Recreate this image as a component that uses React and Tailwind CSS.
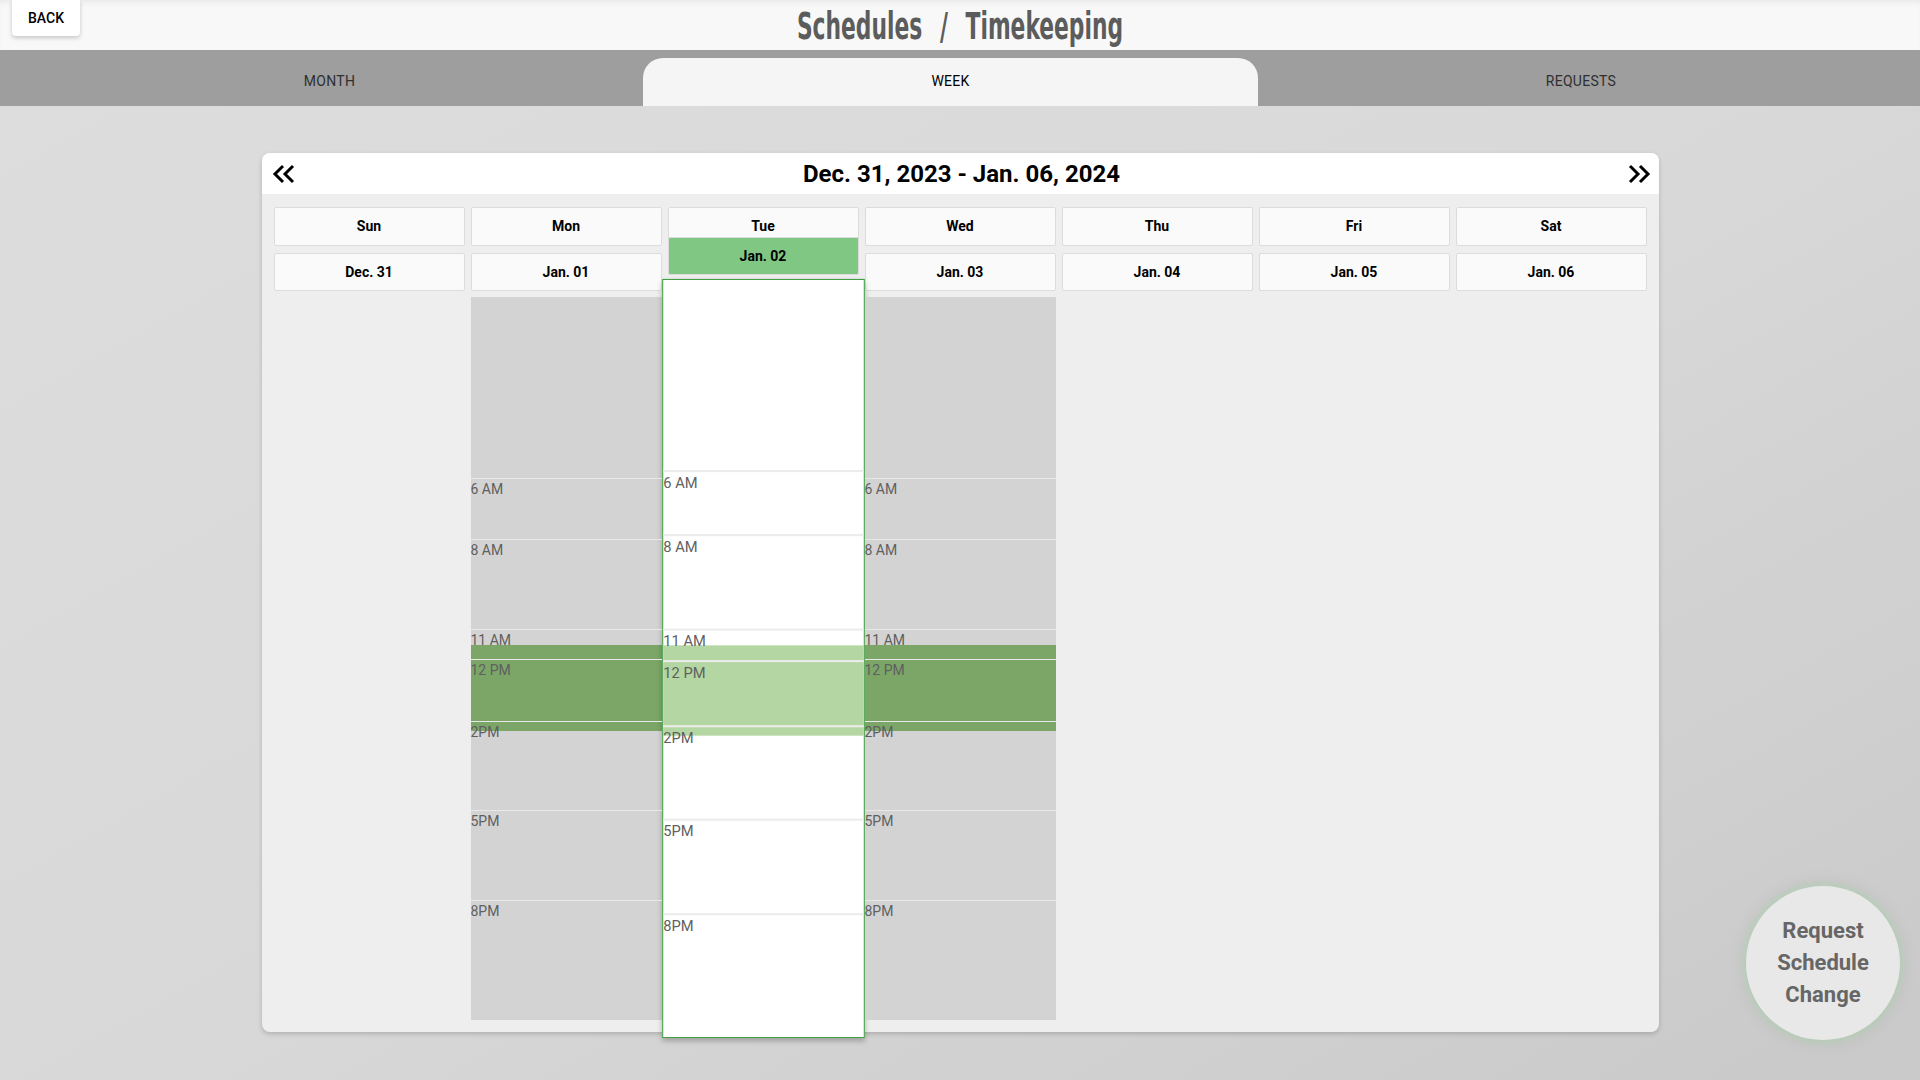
import React from "react";

const days = [
  { name: "Sun", date: "Dec. 31", body: null },
  { name: "Mon", date: "Jan. 01", body: "gray" },
  { name: "Tue", date: "Jan. 02", body: "today" },
  { name: "Wed", date: "Jan. 03", body: "gray" },
  { name: "Thu", date: "Jan. 04", body: null },
  { name: "Fri", date: "Jan. 05", body: null },
  { name: "Sat", date: "Jan. 06", body: null },
];

// heights in px at 30px / hour
const slots = [
  { label: null, h: 181 },
  { label: "6 AM", h: 61 },
  { label: "8 AM", h: 90 },
  { label: "11 AM", h: 30 },
  { label: "12 PM", h: 62 },
  { label: "2PM", h: 89 },
  { label: "5PM", h: 90 },
  { label: "8PM", h: 120 },
];

function Chevrons({ flip }) {
  return (
    <svg width="24" height="20" viewBox="0 0 24 20" className={flip ? "rotate-180" : ""}>
      <path d="M11 2 L3 10 L11 18" fill="none" stroke="#000" strokeWidth="3" />
      <path d="M21 2 L13 10 L21 18" fill="none" stroke="#000" strokeWidth="3" />
    </svg>
  );
}

function DayBody({ today }) {
  return (
    <div
      className={
        today
          ? "relative h-[723px] bg-white border border-[#3f9c42] shadow-[0_3px_5px_rgba(0,0,0,0.25)] scale-105 -mx-[1px]"
          : "relative h-[723px] bg-[#d3d3d3]"
      }
    >
      <div
        className={
          today
            ? "absolute left-0 right-0 top-[348px] h-[86px] bg-[#b3d6a2]"
            : "absolute left-0 right-0 top-[348px] h-[86px] bg-[#7ba668]"
        }
      />
      <div className="relative z-10 flex flex-col">
        {slots.map((s, i) => (
          <div
            key={i}
            style={{ height: s.h }}
            className={i === 0 ? "" : today ? "border-t-2 border-[#ececec]" : "border-t border-[#e8e8e8]"}
          >
            {s.label && (
              <div className="pt-[2px] text-[14px] leading-[16px] text-[#5f5f5f]">{s.label}</div>
            )}
          </div>
        ))}
      </div>
    </div>
  );
}

export default function App() {
  return (
    <div className="relative h-[1080px] w-full overflow-hidden bg-gradient-to-br from-[#dddddd] via-[#d9d9d9] to-[#c9c9c9] font-['Roboto',sans-serif]">
      <header className="grid h-[50px] grid-cols-[1fr_auto_1fr] bg-[#f8f8f8] shadow-[inset_0_5px_6px_-3px_rgba(0,0,0,0.07)]">
        <div className="pl-[12px]">
          <button className="h-[36px] w-[68px] rounded-b-[4px] bg-white text-[14px] font-medium text-black shadow-[0_2px_4px_rgba(0,0,0,0.2)]">
            BACK
          </button>
        </div>
        <h1 className="flex scale-x-[0.655] gap-[27px] whitespace-nowrap pt-[3px] font-['DejaVu_Sans_Condensed','DejaVu_Sans',sans-serif] text-[37px] font-bold leading-[47px] text-[#5c5c5c]">
          <span>Schedules</span>
          <span>/</span>
          <span>Timekeeping</span>
        </h1>
        <div />
      </header>

      <nav className="grid h-[56px] grid-cols-[627px_615px_1fr] bg-[#9e9e9e] px-4 text-[14px] uppercase tracking-[0.02em]">
        <div className="flex items-center justify-center pt-[6px] text-[#2f2f2f]">Month</div>
        <div className="mt-[8px] flex items-center justify-center rounded-t-[20px] bg-[#f5f5f5] pb-[2px] text-black">Week</div>
        <div className="flex items-center justify-center pt-[6px] text-[#2f2f2f]">Requests</div>
      </nav>

      <div className="flex justify-center pt-[47px]">
        <div className="h-[879px] w-[1397px] rounded-[8px] bg-[#eeeeee] shadow-[0_2px_5px_rgba(0,0,0,0.18)]">
          <div className="flex h-[41px] items-center justify-between rounded-t-[8px] bg-white pl-[10px] pr-[7px]">
            <Chevrons />
            <div className="text-[24px] font-bold text-black">Dec. 31, 2023 - Jan. 06, 2024</div>
            <Chevrons flip />
          </div>

          <div className="grid grid-cols-7 items-start gap-x-[6px] px-[12px] pt-[13px]">
            {days.map((d) => (
              <div key={d.name} className="flex flex-col">
                <div className="flex h-[39px] items-center justify-center rounded-[2px] border border-[#dcdcdc] bg-[#fafafa] text-[14px] font-bold text-black">
                  {d.name}
                </div>
                <div
                  className={
                    d.body === "today"
                      ? "relative z-20 mt-[7px] flex h-[38px] -translate-y-[16px] items-center justify-center rounded-[2px] border border-[#dcdcdc] bg-[#81c784] text-[14px] font-bold text-black"
                      : "mt-[7px] flex h-[38px] items-center justify-center rounded-[2px] border border-[#dcdcdc] bg-[#fafafa] text-[14px] font-bold text-black"
                  }
                >
                  {d.date}
                </div>
                {d.body && (
                  <div className="mt-[6px]">
                    <DayBody today={d.body === "today"} />
                  </div>
                )}
              </div>
            ))}
          </div>
        </div>
      </div>

      <button className="absolute bottom-[40px] right-[20px] flex h-[154px] w-[154px] items-center justify-center rounded-full bg-[#e8e8e8] text-[22px] font-bold leading-[32px] text-[#666666] shadow-[0_0_6px_2px_rgba(165,214,167,0.6),0_0_18px_6px_rgba(0,0,0,0.04)]">
        Request
        <br />
        Schedule
        <br />
        Change
      </button>
    </div>
  );
}
